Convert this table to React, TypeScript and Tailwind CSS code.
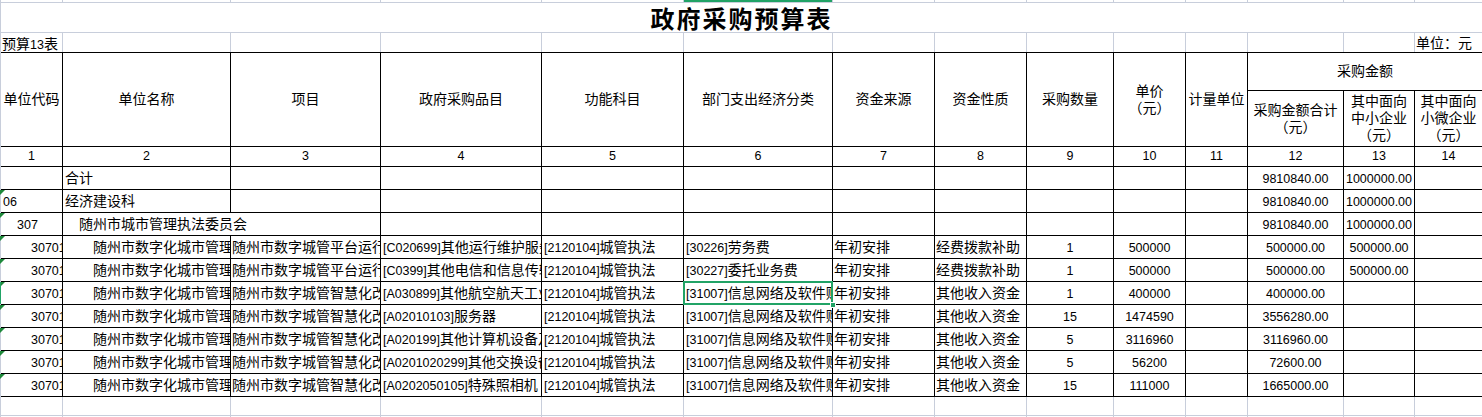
import React from "react";

const COLS =
  "grid-cols-[61px_167px_149px_160px_141px_148px_101px_91px_86px_71px_61px_95px_70px_67px]";

function mix(s: string) {
  const parts = s.split(/([\x20-\x7e]+)/).filter((p) => p.length > 0);
  return parts.map((p, i) =>
    /^[\x20-\x7e]+$/.test(p) ? (
      <span key={i} className="text-[12.5px]">
        {p}
      </span>
    ) : (
      <span key={i}>{p}</span>
    )
  );
}

function LightRow({ h, cells }: { h: string; cells?: React.ReactNode[] }) {
  const items = Array.from({ length: 14 }, (_, i) => i);
  return (
    <div className={"grid gap-x-px bg-[#c8cedb] pl-px " + COLS}>
      {items.map((i) => (
        <div key={i} className={"bg-white " + h}>
          {cells ? cells[i] : null}
        </div>
      ))}
    </div>
  );
}

const headers: React.ReactNode[] = [
  "单位代码",
  "单位名称",
  "项目",
  "政府采购品目",
  "功能科目",
  "部门支出经济分类",
  "资金来源",
  "资金性质",
  "采购数量",
  <>
    单价
    <br />
    （元）
  </>,
  "计量单位",
];

const colCls = [
  "",
  "",
  "pl-px",
  "pl-[2px]",
  "pl-[2px]",
  "pl-[2px]",
  "pl-px",
  "pl-px",
  "text-center",
  "text-center",
  "text-center",
  "text-center",
  "text-center",
  "text-center",
];

type Row = {
  c: string[];
  p1: string;
  p2: string;
  span2?: boolean;
  tri?: boolean;
  sel?: boolean;
};

const svc = "随州市数字化城市管理局";
const pa = "随州市数字城管平台运行维护";
const pb = "随州市数字城管智慧化改造";
const fn = "[2120104]城管执法";
const inf = "[31007]信息网络及软件购置更新";

const rows: Row[] = [
  { c: ["", "合计", "", "", "", "", "", "", "", "", "", "9810840.00", "1000000.00", ""], p1: "pl-[2px]", p2: "pl-[2px]" },
  { c: ["06", "经济建设科", "", "", "", "", "", "", "", "", "", "9810840.00", "1000000.00", ""], p1: "pl-[2px]", p2: "pl-[2px]", tri: true },
  { c: ["307", "随州市城市管理执法委员会", "", "", "", "", "", "", "", "", "9810840.00", "1000000.00", ""], p1: "pl-[16px]", p2: "pl-[16px]", span2: true, tri: true },
  { c: ["307011", svc, pa, "[C020699]其他运行维护服务", fn, "[30226]劳务费", "年初安排", "经费拨款补助", "1", "500000", "", "500000.00", "500000.00", ""], p1: "pl-[30px]", p2: "pl-[30px]", tri: true },
  { c: ["307011", svc, pa, "[C0399]其他电信和信息传输服务", fn, "[30227]委托业务费", "年初安排", "经费拨款补助", "1", "500000", "", "500000.00", "500000.00", ""], p1: "pl-[30px]", p2: "pl-[30px]", tri: true },
  { c: ["307011", svc, pb, "[A030899]其他航空航天工业设备", fn, inf, "年初安排", "其他收入资金", "1", "400000", "", "400000.00", "", ""], p1: "pl-[30px]", p2: "pl-[30px]", tri: true, sel: true },
  { c: ["307011", svc, pb, "[A02010103]服务器", fn, inf, "年初安排", "其他收入资金", "15", "1474590", "", "3556280.00", "", ""], p1: "pl-[30px]", p2: "pl-[30px]", tri: true },
  { c: ["307011", svc, pb, "[A020199]其他计算机设备及软件", fn, inf, "年初安排", "其他收入资金", "5", "3116960", "", "3116960.00", "", ""], p1: "pl-[30px]", p2: "pl-[30px]", tri: true },
  { c: ["307011", svc, pb, "[A0201020299]其他交换设备", fn, inf, "年初安排", "其他收入资金", "5", "56200", "", "72600.00", "", ""], p1: "pl-[30px]", p2: "pl-[30px]", tri: true },
  { c: ["307011", svc, pb, "[A0202050105]特殊照相机", fn, inf, "年初安排", "其他收入资金", "15", "111000", "", "1665000.00", "", ""], p1: "pl-[30px]", p2: "pl-[30px]", tri: true },
];

function DataRow({ r }: { r: Row }) {
  const out: React.ReactNode[] = [];
  let col = 0;
  r.c.forEach((t, idx) => {
    const isSpan = r.span2 && col === 1;
    let pad = colCls[col];
    if (col === 0) pad = r.p1;
    if (col === 1) pad = r.p2;
    const first = col === 0;
    const selected = r.sel && col === 5;
    out.push(
      <div key={idx} className={"relative bg-white " + (isSpan ? "col-span-2" : "")}>
        <div className={"h-full overflow-hidden whitespace-nowrap leading-[22px] " + pad}>{mix(t)}</div>
        {first && r.tri ? (
          <span className="absolute -left-px top-0 z-10 h-0 w-0 border-t-[5px] border-r-[5px] border-t-[#1f8a3c] border-r-transparent" />
        ) : null}
        {first && r.sel ? <span className="absolute -left-px top-0 bottom-0 z-10 w-px bg-[#21a366]" /> : null}
        {selected ? (
          <>
            <span className="absolute -inset-px z-10 border-2 border-[#21a366]" />
            <span className="absolute -right-[4px] -bottom-[4px] z-20 h-[6px] w-[6px] border border-white bg-[#21a366]" />
          </>
        ) : null}
      </div>
    );
    col += isSpan ? 2 : 1;
  });
  return <>{out}</>;
}

export default function App() {
  const top: React.ReactNode[] = Array.from({ length: 14 }, () => null);
  const topCells = Array.from({ length: 14 }, (_, i) => i);
  return (
    <div className="h-[417px] w-[1482px] overflow-hidden bg-white text-[14px] text-black font-['Liberation_Sans','Noto_Sans_CJK_SC',sans-serif]">
      {/* top sliver */}
      <div className={"grid gap-x-px bg-[#c8cedb] pl-px " + COLS}>
        {topCells.map((i) => (
          <div key={i} className={"h-[2px] " + (i === 5 ? "bg-[#21a366]" : "bg-white")} />
        ))}
      </div>
      <div className="h-px bg-[#c8cedb]" />
      <div className="flex h-[29px] justify-center border-l border-[#c8cedb] pt-[3px] text-[24px] font-bold leading-[28px] tracking-[2px]">
        政府采购预算表
      </div>
      <div className="h-px bg-[#c8cedb]" />
      <LightRow
        h="h-[19px] overflow-visible whitespace-nowrap"
        cells={top.map((_, i) =>
          i === 0 ? (
            <div className="pl-px pt-[4px] leading-[15px]">{mix("预算13表")}</div>
          ) : i === 13 ? (
            <div className="pl-px pt-[3px] leading-[15px]">单位：元</div>
          ) : null
        )}
      />
      {/* main table */}
      <div className="bg-[#c8cedb] pl-px">
        <div className={"grid gap-px bg-black py-px grid-rows-[37px_55px_19px_repeat(10,22px)] " + COLS}>
          {headers.map((h, i) => (
            <div key={i} className="row-span-2 flex items-center justify-center bg-white text-center leading-[17px]">
              <div>{h}</div>
            </div>
          ))}
          <div className="col-span-3 flex items-center justify-center bg-white leading-[17px]">采购金额</div>
          <div className="flex items-center justify-center bg-white text-center leading-[17px]">
            <div>
              采购金额合计
              <br />
              （元）
            </div>
          </div>
          <div className="flex items-center justify-center bg-white text-center leading-[17px]">
            <div>
              其中面向
              <br />
              中小企业
              <br />
              （元）
            </div>
          </div>
          <div className="flex items-center justify-center bg-white text-center leading-[17px]">
            <div>
              其中面向
              <br />
              小微企业
              <br />
              （元）
            </div>
          </div>
          {topCells.map((i) => (
            <div key={"n" + i} className="bg-white text-center text-[12.5px] leading-[19px]">
              {i + 1}
            </div>
          ))}
          {rows.map((r, i) => (
            <DataRow key={i} r={r} />
          ))}
        </div>
      </div>
      <LightRow h="h-[18px]" />
      <div className="h-px bg-[#c8cedb]" />
      <LightRow h="h-[4px]" />
    </div>
  );
}
